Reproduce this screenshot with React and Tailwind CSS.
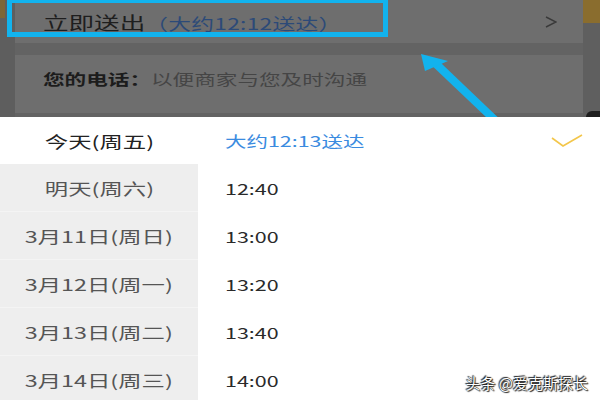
export default function App() {
  const days = ["明天(周六)", "3月11日(周日)", "3月12日(周一)", "3月13日(周二)", "3月14日(周三)"];
  const times = ["12:40", "13:00", "13:20", "13:40", "14:00"];
  return (
    <div className="relative w-[600px] h-[400px] overflow-hidden bg-white font-['Noto_Sans_CJK_SC','Noto_Sans',sans-serif]">
      {/* dimmed top section */}
      <div className="relative flex h-[117px] overflow-hidden bg-[#636363]">
        <div className="flex w-[15px] flex-col bg-[#5e5e5e]">
          <div className="h-[18px] w-[5px] bg-[#7d6636]" />
        </div>
        <div className="flex flex-1 flex-col">
          <div className="flex h-[43px] items-center bg-[#6e6e6e] pl-[28px] pr-[26px]">
            <span className="inline-block origin-left scale-x-[1.42] whitespace-nowrap leading-none">
              <span className="text-[18px] text-[#1e1e1e]">立即送出</span>
              <span className="text-[16px] tracking-[0.2px] text-[#2c4a78]">（大约12:12送达）</span>
            </span>
            <svg className="ml-auto" width="12" height="12" viewBox="0 0 12 12">
              <polyline points="1,1 11,6 1,11" fill="none" stroke="#3a3a3a" strokeWidth="1.4" />
            </svg>
          </div>
          <div className="h-[12px]" />
          <div className="flex h-[58px] items-start bg-[#6e6e6e] pl-[28px] pt-[16px]">
            <span className="inline-block origin-left scale-x-[1.44] whitespace-nowrap text-[15px] leading-[16px]">
              <span className="font-bold text-[#1c1c1c]">您的电话：</span>
              <span className="text-[#454545]">以便商家与您及时沟通</span>
            </span>
          </div>
        </div>
        <div className="flex w-[17px] flex-col bg-[#5f5f5f]">
          <div className="h-[23px] bg-[#8a6d2e]" />
          <div className="mt-auto ml-[3px] h-[6px] rounded-tl-full bg-[#1e1e1e]" />
        </div>

        {/* annotation box */}
        <div className="absolute left-[7px] top-[-2px] h-[39px] w-[381px] border-[5px] border-[#12b3ee]" />
        {/* annotation arrow */}
        <svg className="absolute left-0 top-0" width="600" height="117" viewBox="0 0 600 117">
          <line x1="434" y1="62" x2="497" y2="122" stroke="#12b3ee" strokeWidth="8" />
          <polygon points="421,54 448,61 425,71" fill="#12b3ee" />
        </svg>
      </div>

      {/* picker */}
      <div className="flex h-[283px]">
        <div className="flex w-[198px] flex-col bg-[#eeeeee]">
          <div className="flex h-[47px] shrink-0 items-center justify-center bg-white">
            <span className="inline-block origin-center scale-x-[1.46] whitespace-nowrap text-[16px] leading-none text-[#222]">今天(周五)</span>
          </div>
          {days.map((d) => (
            <div key={d} className="flex h-[48px] shrink-0 items-center justify-center border-b border-[#f4f4f4]">
              <span className="inline-block origin-center scale-x-[1.46] whitespace-nowrap text-[16px] leading-none text-[#555]">{d}</span>
            </div>
          ))}
        </div>
        <div className="flex flex-1 flex-col pl-[27px]">
          <div className="flex h-[47px] shrink-0 items-center pr-[17px]">
            <span className="inline-block origin-left scale-x-[1.43] whitespace-nowrap text-[15px] leading-none text-[#3a8be0]">大约12:13送达</span>
            <svg className="ml-auto" width="32" height="16" viewBox="0 0 32 16">
              <polyline points="1,5 12,13 31,2" fill="none" stroke="#f3c64a" strokeWidth="1.6" />
            </svg>
          </div>
          {times.map((t) => (
            <div key={t} className="flex h-[48px] shrink-0 items-center">
              <span className="inline-block origin-left scale-x-[1.43] whitespace-nowrap text-[15px] leading-none text-[#2a2a2a]">{t}</span>
            </div>
          ))}
        </div>
      </div>

      {/* watermark */}
      <div className="absolute bottom-[10px] right-[12px] whitespace-nowrap text-[15px] leading-none text-white [text-shadow:0_0_1px_#000,1px_1px_1px_#222,-1px_-1px_1px_#222]">
        头条 @爱克斯探长
      </div>
    </div>
  );
}
